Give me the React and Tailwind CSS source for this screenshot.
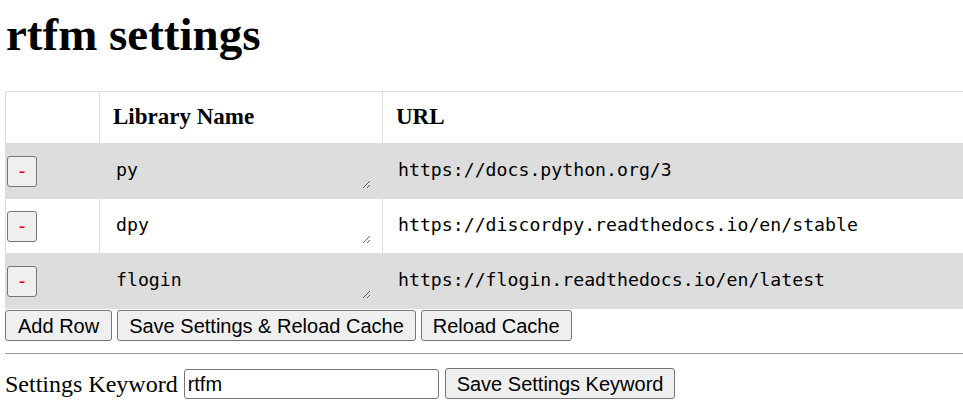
import React from "react";

const rows = [
  { name: "py", url: "https://docs.python.org/3" },
  { name: "dpy", url: "https://discordpy.readthedocs.io/en/stable" },
  { name: "flogin", url: "https://flogin.readthedocs.io/en/latest" },
];

const serif = "font-['Liberation_Serif','Times_New_Roman',serif]";
const sans = "font-['Liberation_Sans',Arial,sans-serif]";
const mono = "font-['DejaVu_Sans_Mono',Consolas,monospace]";

function Btn({ children, className = "" }) {
  return (
    <button
      className={`${sans} h-[31px] rounded-[3px] border border-[#767676] bg-[#efefef] px-[11px] text-[20px] leading-none text-black ${className}`}
    >
      {children}
    </button>
  );
}

export default function App() {
  return (
    <div className={`${serif} w-[963px] h-[419px] overflow-hidden bg-white px-[5px] text-black`}>
      <h1 className="pl-px pt-[5px] text-[47px] font-bold leading-[58px]">rtfm settings</h1>

      <div className="mt-[28px] w-[958px] overflow-hidden">
        <table className="w-[1100px] border-collapse">
          <thead>
            <tr className="h-[52px]">
              <th className="w-[94px] border border-[#dddddd]"></th>
              <th className="w-[283px] border border-[#dddddd] pl-[13px] text-left text-[23px] font-bold">
                Library Name
              </th>
              <th className="border border-[#dddddd] pl-[13px] text-left text-[23px] font-bold">URL</th>
            </tr>
          </thead>
          <tbody>
            {rows.map((r, i) => (
              <tr key={r.name} className={`h-[55px] ${i % 2 === 0 ? "bg-[#dddddd]" : "bg-white"}`}>
                <td className="border border-[#dddddd] pl-px align-middle">
                  <button
                    className={`${sans} flex h-[31px] w-[30px] items-center justify-center rounded-[3px] border border-[#767676] bg-[#efefef] text-[20px] leading-none text-[#ff0000]`}
                  >
                    -
                  </button>
                </td>
                <td className="border border-[#dddddd] px-[8px] align-middle">
                  <textarea
                    defaultValue={r.name}
                    rows={1}
                    className={`${mono} block h-[36px] w-[263px] border-0 bg-transparent px-[8px] py-[6px] text-[18.2px] leading-[21px] text-black outline-none`}
                  />
                </td>
                <td className="border border-[#dddddd] pl-[7px] pr-[8px] align-middle">
                  <textarea
                    defaultValue={r.url}
                    rows={1}
                    className={`${mono} block h-[36px] w-[680px] border-0 bg-transparent px-[8px] py-[6px] text-[18.2px] leading-[21px] text-black outline-none`}
                  />
                </td>
              </tr>
            ))}
          </tbody>
        </table>
      </div>

      <div className="mt-px flex gap-[5px]">
        <Btn className="px-[12px]">Add Row</Btn>
        <Btn>Save Settings &amp; Reload Cache</Btn>
        <Btn>Reload Cache</Btn>
      </div>

      <hr className="mt-[12px] w-[958px] border-t border-[#9a9a9a]" />

      <div className="mt-[14px] flex items-center">
        <span className="text-[24px] leading-[30px]">Settings Keyword</span>
        <input
          defaultValue="rtfm"
          className={`${sans} ml-[6px] h-[30px] w-[255px] rounded-[3px] border border-[#767676] px-[3px] text-[20px] text-black outline-none`}
        />
        <Btn className="ml-[6px]">Save Settings Keyword</Btn>
      </div>
    </div>
  );
}
